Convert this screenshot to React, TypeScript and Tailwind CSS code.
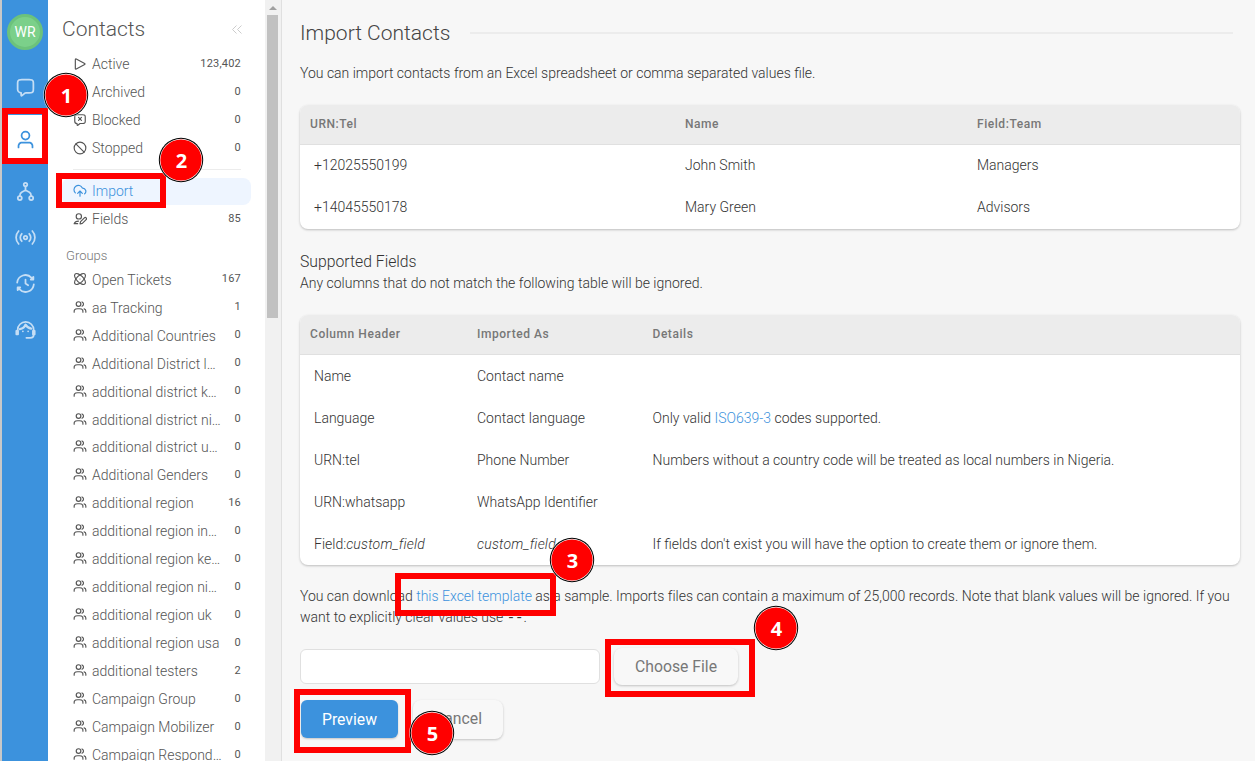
import type { ReactNode } from "react";

type IconProps = { className?: string; children: ReactNode };

function Icon({ className = "size-[14px]", children }: IconProps) {
  return (
    <svg
      viewBox="0 0 24 24"
      fill="none"
      stroke="currentColor"
      strokeWidth={2}
      strokeLinecap="round"
      strokeLinejoin="round"
      className={`shrink-0 ${className}`}
    >
      {children}
    </svg>
  );
}

const PlayIcon = () => (
  <Icon>
    <path d="M4 4.500c0-1 .7-1.500 1.600-1l14.400 7.600c.9.500.9 1.300 0 1.800L5.600 20.500c-.9.500-1.600 0-1.600-1z" />
  </Icon>
);
const ArchiveIcon = () => (
  <Icon>
    <path d="M4 8v9.200C4 20 5 21 7.800 21h8.400c2.800 0 3.800-1 3.800-3.800V8M2 3h20v5H2zM9.500 12h5" />
  </Icon>
);
const MessageXIcon = () => (
  <Icon>
    <path d="M9.500 7.500l5 5m0-5l-5 5M7 18v2.300c0 .9.700 1 1.300.6L12 18h4.200c1.680 0 2.520 0 3.160-.33a3 3 0 0 0 1.310-1.310C21 15.720 21 14.880 21 13.200V7.800c0-1.680 0-2.520-.33-3.160a3 3 0 0 0-1.310-1.310C18.720 3 17.880 3 16.200 3H7.800c-1.680 0-2.520 0-3.160.33a3 3 0 0 0-1.310 1.310C3 5.280 3 6.120 3 7.800V14a4 4 0 0 0 4 4z" />
  </Icon>
);
const SlashIcon = () => (
  <Icon>
    <circle cx="12" cy="12" r="10" />
    <path d="M4.930 4.930l14.140 14.140" />
  </Icon>
);
const UploadCloudIcon = () => (
  <Icon>
    <path d="M8 16l4-4 4 4M12 12v9M20 16.740A5.500 5.500 0 0 0 16.500 7a.62.62 0 0 1-.53-.3A7.500 7.500 0 1 0 4 15.330" />
  </Icon>
);
const UserEditIcon = () => (
  <Icon>
    <circle cx="10" cy="7.500" r="4.500" />
    <path d="M2 20c1-3 3.500-4.500 7.500-4.500M12 20.500l1-4 6.500-6.500a2.100 2.100 0 0 1 3 3l-6.500 6.500zM2 20h6" />
  </Icon>
);
const AtomIcon = () => (
  <Icon className="-mt-px size-[14px]">
    <ellipse cx="12" cy="12" rx="12" ry="5.600" transform="rotate(45 12 12)" />
    <ellipse cx="12" cy="12" rx="12" ry="5.600" transform="rotate(-45 12 12)" />
    <path d="M12 12h.01" />
  </Icon>
);
const UsersIcon = () => (
  <Icon className="-mt-0.5 size-[14px]">
    <path d="M22 21v-2a4 4 0 0 0-3-3.870M15.500 3.290a4 4 0 0 1 0 7.420M17 21c0-1.860 0-2.800-.3-3.530a4 4 0 0 0-2.170-2.170C13.800 15 12.860 15 11 15H8c-1.860 0-2.800 0-3.530.3a4 4 0 0 0-2.170 2.170C2 18.200 2 19.140 2 21M13.500 7a4 4 0 1 1-8 0 4 4 0 0 1 8 0z" />
  </Icon>
);

const navItems: { name: string; box: string; icon: ReactNode }[] = [
  {
    name: "messages",
    box: "h-[46px] mb-[5px] text-[#c5def5]",
    icon: (
      <path d="M3 7.800c0-1.680 0-2.520.33-3.160a3 3 0 0 1 1.310-1.310C5.280 3 6.120 3 7.800 3h8.400c1.680 0 2.520 0 3.160.33a3 3 0 0 1 1.310 1.310C21 5.280 21 6.120 21 7.800v5.400c0 1.680 0 2.520-.33 3.160a3 3 0 0 1-1.310 1.310C18.720 18 17.880 18 16.200 18h-2.520c-.62 0-.93 0-1.230.06a3 3 0 0 0-.77.270c-.27.140-.51.330-1 .72l-2.380 1.910c-.42.330-.63.500-.8.500a.5.5 0 0 1-.39-.19C7 21.130 7 20.870 7 20.340V18a4 4 0 0 1-4-4z" />
    ),
  },
  {
    name: "contacts",
    box: "h-[49px] mb-1 bg-white text-[#3c92dd]",
    icon: (
      <path d="M20 21c0-1.400 0-2.090-.17-2.660a4 4 0 0 0-2.670-2.670C16.590 15.500 15.900 15.500 14.500 15.500h-5c-1.400 0-2.090 0-2.660.17a4 4 0 0 0-2.670 2.670C4 18.910 4 19.600 4 21M16.500 7.500a4.500 4.500 0 1 1-9 0 4.500 4.500 0 0 1 9 0z" />
    ),
  },
  {
    name: "flows",
    box: "h-[46px] text-[#c5def5]",
    icon: (
      <>
        <circle cx="12" cy="4" r="2" />
        <circle cx="5.500" cy="19.500" r="2.300" />
        <circle cx="18.500" cy="19.500" r="2.300" />
        <path d="M12 6v5M5.500 17c0-2 .5-3.500 2.500-4.500l4-2 4 2c2 1 2.500 2.500 2.500 4.500" />
      </>
    ),
  },
  {
    name: "broadcasts",
    box: "h-[46px] text-[#c5def5]",
    icon: (
      <>
        <circle cx="12" cy="12" r="2" />
        <path d="M7.760 16.240a6 6 0 0 1 0-8.480M16.240 7.760a6 6 0 0 1 0 8.480M4.230 19.420c-3.970-4.100-3.970-10.740 0-14.840M19.770 4.580c3.970 4.100 3.970 10.740 0 14.840" />
      </>
    ),
  },
  {
    name: "campaigns",
    box: "h-[46px] text-[#c5def5]",
    icon: (
      <>
        <path d="M2.500 11A9.500 9.500 0 0 1 19 5.500M21.500 13A9.500 9.500 0 0 1 5 18.500M12 7.500V12l3 2" />
        <path fill="currentColor" d="M21 4.500v3h-3zM3 19.500v-3h3z" />
      </>
    ),
  },
  {
    name: "tickets",
    box: "h-[47px] text-[#c5def5]",
    icon: (
      <>
        <path d="M3 12.500a9.200 9.200 0 0 1 18.400 0V18c0 2.500-1.500 3.500-4 3.500H13" />
        <path fill="currentColor" d="M1.500 13.500h2v4h-2zM20.500 13.500h2v4h-2z" />
        <path strokeWidth="2.500" d="M5.500 11.500c3-.5 5.500-2 6.500-5 1.500 2.500 3.500 4 6.500 4.500" />
        <path d="M9 14v.01M15 14v.01" />
      </>
    ),
  },
];

function NavRail() {
  return (
    <nav className="flex w-12 shrink-0 flex-col border-l-2 border-[#c8c8c8] bg-[#3c92dd]">
      <div className="mt-3.5 ml-[5px] flex size-9 items-center justify-center rounded-full border-[3px] border-[#6cc27c] bg-[#7bd08a] text-sm text-white">
        WR
      </div>
      <div className="mt-3.5 flex flex-col">
        {navItems.map((n) => (
          <div key={n.name} className={`flex items-center justify-center pl-px ${n.box}`}>
            <Icon className="size-[21px]">{n.icon}</Icon>
          </div>
        ))}
      </div>
    </nav>
  );
}

type RowProps = { icon: ReactNode; label: string; count?: string; active?: boolean };

function MenuRow({ icon, label, count, active }: RowProps) {
  return (
    <div
      className={`flex items-center pr-2.5 pl-[11px] ${
        active ? "h-[27px] rounded-lg bg-[#eef5ff] text-[#3c92dd]" : "h-[27.960px] text-[#555]"
      }`}
    >
      {icon}
      <span className="ml-[5px] text-sm font-light whitespace-nowrap">{label}</span>
      <span className="ml-auto text-[11px] tracking-[0.2px] text-[#555]">{count}</span>
    </div>
  );
}

const groups: [string, string][] = [
  ["aa Tracking", "1"],
  ["Additional Countries", "0"],
  ["Additional District l…", "0"],
  ["additional district k…", "0"],
  ["additional district ni…", "0"],
  ["additional district u…", "0"],
  ["Additional Genders", "0"],
  ["additional region", "16"],
  ["additional region in…", "0"],
  ["additional region ke…", "0"],
  ["additional region ni…", "0"],
  ["additional region uk", "0"],
  ["additional region usa", "0"],
  ["additional testers", "2"],
  ["Campaign Group", "0"],
  ["Campaign Mobilizer", "0"],
  ["Campaign Respond…", "0"],
];

function Sidebar() {
  return (
    <aside className="flex w-[217px] shrink-0 flex-col overflow-hidden bg-white">
      <div className="flex h-[50px] shrink-0 items-center justify-between pt-[9px] pr-2 pl-3.5">
        <h1 className="text-[21px] font-light text-[#555]">Contacts</h1>
        <svg viewBox="0 0 10 9" className="mr-[15px] h-[9px] w-2.5 fill-none stroke-[#ccc]">
          <path d="M4.500 .5l-4 4 4 4M9.500 .5l-4 4 4 4" />
        </svg>
      </div>
      <div className="ml-3.5 w-[189px]">
        <MenuRow icon={<PlayIcon />} label="Active" count="123,402" />
        <MenuRow icon={<ArchiveIcon />} label="Archived" count="0" />
        <MenuRow icon={<MessageXIcon />} label="Blocked" count="0" />
        <MenuRow icon={<SlashIcon />} label="Stopped" count="0" />
        <div className="mt-[7px] mr-2.5 mb-2 ml-[11px] h-px bg-[#ececec]" />
        <MenuRow icon={<UploadCloudIcon />} label="Import" active />
        <MenuRow icon={<UserEditIcon />} label="Fields" count="85" />
        <div className="mt-[13px] flex h-5 items-center pl-1 text-[13px] font-light text-[#777]">
          Groups
        </div>
        <MenuRow icon={<AtomIcon />} label="Open Tickets" count="167" />
        {groups.map(([label, count]) => (
          <MenuRow key={label} icon={<UsersIcon />} label={label} count={count} />
        ))}
      </div>
    </aside>
  );
}

function Scrollbar() {
  return (
    <div className="flex w-4 shrink-0 flex-col items-start bg-[#f1f1f1] pl-0.5">
      <svg viewBox="0 0 8 4" className="mt-1.5 ml-[1.500px] h-1 w-2 shrink-0 fill-[#a0a0a0]">
        <path d="M0 4l4-4 4 4z" />
      </svg>
      <div className="mt-[5px] h-[303px] w-[11px] bg-[#c1c1c1]" />
    </div>
  );
}

type TableProps = { cols: string; head: string[]; rows: ReactNode[][]; pull?: string };

function Table({ cols, head, rows, pull = "" }: TableProps) {
  return (
    <div className="overflow-hidden rounded-lg bg-white shadow-[0_1px_3px_rgba(0,0,0,0.12),0_1px_2px_rgba(0,0,0,0.12)]">
      <div
        className={`grid h-10 ${cols} items-center border-b border-[#e0e0e0] bg-[#ececec] pb-px pl-2.5`}
      >
        {head.map((h) => (
          <div key={h} className="text-xs font-medium tracking-[0.55px] text-[#777]">
            {h}
          </div>
        ))}
      </div>
      {rows.map((row, i) => (
        <div key={i} className={`grid h-[42px] ${cols} items-center pl-2.5 ${pull}`}>
          {row.map((cell, j) => (
            <div key={j} className={j === 0 ? "pl-1" : ""}>
              {cell}
            </div>
          ))}
        </div>
      ))}
    </div>
  );
}

function Content() {
  return (
    <main className="flex min-w-0 flex-1 flex-col border-l border-[#e0e0e0] bg-[#f7f7f7] pr-[15px] pl-[18px] text-sm leading-[21px] font-light text-[#333]">
      <div className="flex h-[66px] items-center">
        <h2 className="text-[21px] text-[#444]">Import Contacts</h2>
        <div className="mr-[7px] ml-5 h-0.5 flex-1 bg-[#ececec]" />
      </div>
      <p className="mt-[-3px] mb-[21px]">
        You can import contacts from an Excel spreadsheet or comma separated values file.
      </p>
      <Table
        cols="grid-cols-[375px_292px_1fr]"
        pull="pb-0.5"
        head={["URN:Tel", "Name", "Field:Team"]}
        rows={[
          ["+12025550199", "John Smith", "Managers"],
          ["+14045550178", "Mary Green", "Advisors"],
        ]}
      />
      <h3 className="mt-[22px] text-[15.750px] leading-[22px]">Supported Fields</h3>
      <p className="mb-[21px]">Any columns that do not match the following table will be ignored.</p>
      <Table
        cols="grid-cols-[167px_175.500px_1fr]"
        head={["Column Header", "Imported As", "Details"]}
        rows={[
          ["Name", "Contact name", ""],
          [
            "Language",
            "Contact language",
            <>
              Only valid <span className="text-[#3c92dd]">ISO639-3</span> codes supported.
            </>,
          ],
          [
            "URN:tel",
            "Phone Number",
            "Numbers without a country code will be treated as local numbers in Nigeria.",
          ],
          ["URN:whatsapp", "WhatsApp Identifier", ""],
          [
            <>
              Field:<i className="tracking-[0.22px]">custom_field</i>
            </>,
            <i className="tracking-[0.22px]">custom_field</i>,
            "If fields don't exist you will have the option to create them or ignore them.",
          ],
        ]}
      />
      <p className="mt-[21px] h-[42px] tracking-[-0.007px] whitespace-nowrap">
        You can download <span className="text-[#3c92dd]">this Excel template</span> as a sample.
        Imports files can contain a maximum of 25,000 records. Note that blank values will be
        ignored. If you
        <br />
        want to explicitly clear values use{" "}
        <code className="font-['Liberation_Mono',monospace] text-sm leading-none">--</code>.
      </p>
      <div className="mt-5 flex h-9 items-center text-base font-normal text-[#777]">
        <div className="h-[35px] w-[300px] rounded-md border border-[#e0e0e0] bg-white" />
        <div className="ml-3.5 flex h-[37px] w-[124px] items-center justify-center rounded-lg bg-[#f8f8f8] pt-0.5 text-[15.750px] shadow-[0_1px_3px_rgba(0,0,0,0.12),0_1px_2px_rgba(0,0,0,0.1)]">
          Choose File
        </div>
      </div>
      <div className="mt-4 flex text-base font-normal">
        <div className="ml-px flex h-[38px] w-[97px] items-center justify-center rounded-md bg-[#3c92dd] pt-px text-[15.750px] text-white shadow-[0_1px_2px_rgba(0,0,0,0.2)]">
          Preview
        </div>
        <div className="ml-[15px] flex h-[39px] w-[90px] items-center justify-center rounded-lg bg-[#f8f8f8] pb-px text-[15.750px] text-[#777] shadow-[0_1px_3px_rgba(0,0,0,0.12),0_1px_2px_rgba(0,0,0,0.1)]">
          Cancel
        </div>
      </div>
    </main>
  );
}

const frames = [
  "left-[2px] top-[108px] w-[46px] h-[56px]",
  "left-[56px] top-[173px] w-[110px] h-[35px]",
  "left-[395px] top-[573px] w-[161px] h-[43px]",
  "left-[605px] top-[639px] w-[150px] h-[58px]",
  "left-[294px] top-[689px] w-[117px] h-[64px]",
];
const badges = [
  "left-[43px] top-[72px]",
  "left-[158px] top-[137px]",
  "left-[549px] top-[537px]",
  "left-[753px] top-[605px]",
  "left-[409px] top-[710px]",
];

export default function App() {
  return (
    <div className="relative flex h-[761px] w-[1255px] overflow-hidden bg-[#f7f7f7] font-[Roboto,sans-serif]">
      <NavRail />
      <Sidebar />
      <Scrollbar />
      <Content />
      {frames.map((f) => (
        <div key={f} className={`absolute border-[6px] border-[#ff0000] ${f}`} />
      ))}
      {badges.map((b, i) => (
        <div key={b} className={`absolute grid size-[46px] place-items-center ${b}`}>
          <svg viewBox="0 0 46 46" className="col-start-1 row-start-1 size-[46px]">
            <circle cx="23" cy="23" r="22.800" fill="#fff" fillOpacity="0.700" />
            <circle cx="23" cy="23" r="22.200" fill="#000" />
            <circle cx="23" cy="23" r="21.200" fill="#fff" />
            <circle cx="23" cy="23" r="20.600" fill="#f00" />
          </svg>
          <span className="col-start-1 row-start-1 pt-0.5 pl-px font-['Open_Sans',sans-serif] text-xl leading-7 font-bold text-white">
            {i + 1}
          </span>
        </div>
      ))}
    </div>
  );
}
